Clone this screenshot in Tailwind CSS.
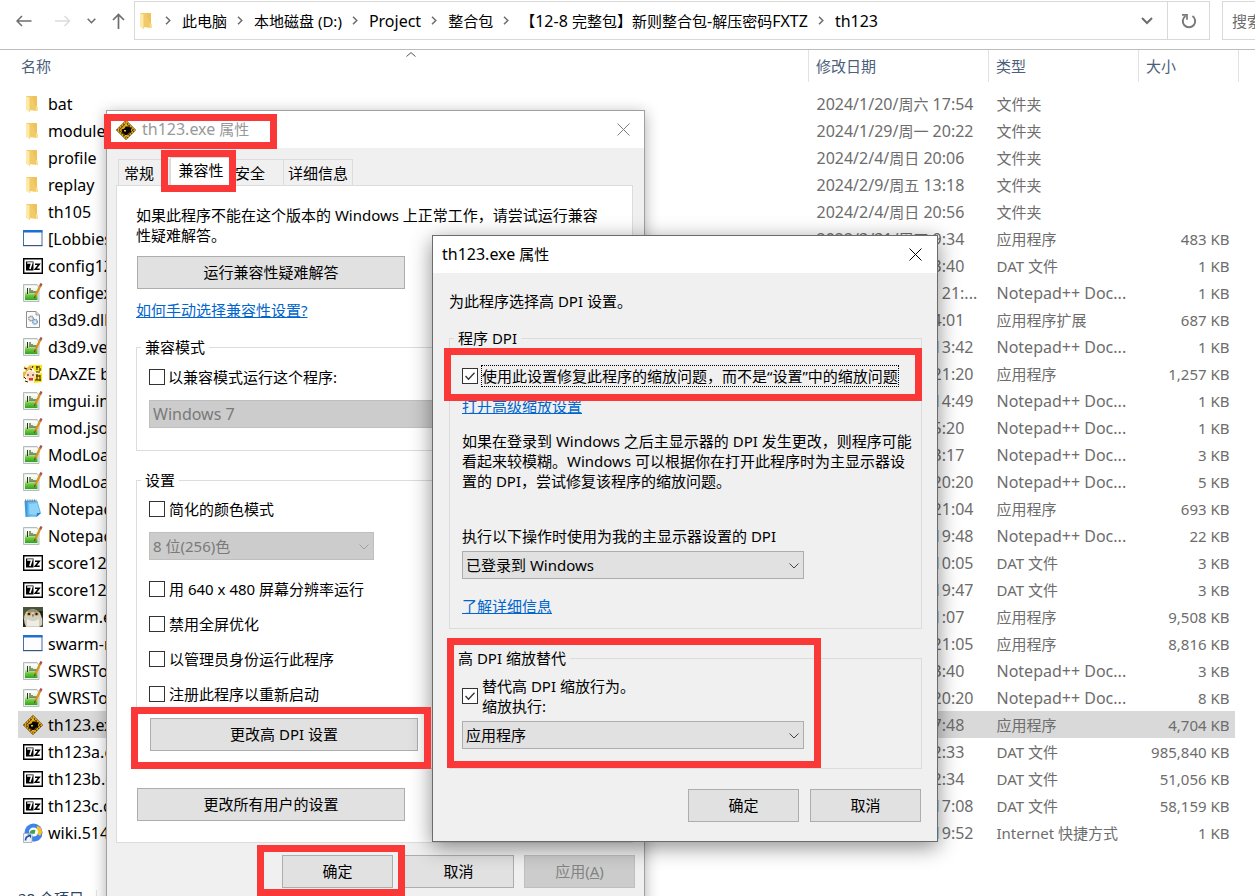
<!DOCTYPE html>
<html lang="zh-CN">
<head>
<meta charset="utf-8">
<title>th123</title>
<script src="https://cdn.jsdelivr.net/npm/@tailwindcss/browser@4"></script>
</head>
<body class="bg-white">
<svg class="absolute h-0 w-0" aria-hidden="true">
  <defs><linearGradient id="gn" x1="0" y1="0" x2="0" y2="1"><stop offset="0" stop-color="#fff"/><stop offset=".4" stop-color="#e2f3d0"/><stop offset=".65" stop-color="#74c840"/><stop offset="1" stop-color="#2da421"/></linearGradient></defs>
  <symbol id="i-folder" viewBox="0 0 20 20"><path d="M3 2h11v15l-8-1z" fill="#f0cb68"/><path d="M9 2h5v11h-1z" fill="#eec25c"/><path d="M3 2l4 2v14l-4-2z" fill="#fde9a9"/><path d="M6 3.500h1V18H6z" fill="#f7d987"/><path d="M13 12l2 1v4h-2z" fill="#fbe08f"/></symbol>
  <symbol id="i-app" viewBox="0 0 20 20"><path d="M.5 1.500h18.500v15H.5z" fill="#fdfdff" stroke="#4a6da8"/><path d="M0 1h19.500v2.500H0z" fill="#1d6fd0"/><path d="M0 16h19.500v1.200H0z" fill="#3a5580"/></symbol>
  <symbol id="i-7z" viewBox="0 0 20 20"><path d="M.7 2.700h18.600v14.600H.7z" fill="#fff" stroke="#000" stroke-width="1.400"/><path d="M3 5.500h7.500v9H3z" fill="#000"/><path d="M4.200 7h4.600L6.900 13" fill="none" stroke="#fff" stroke-width="1.600"/><path d="M12 8.300h4.200l-3.900 5h4.400" fill="none" stroke="#000" stroke-width="1.600"/></symbol>
  <symbol id="i-npp" viewBox="0 0 20 20"><path d="M.5 1.500h13.500l2 2.500v14.500H.5z" fill="#e8ecec" stroke="#a5adad" stroke-width=".8"/><path d="M2 3h11.500l1 1.500v12.500H2z" fill="url(#gn)"/><path d="M4.500 5v6M7 5v5M9 7v3M11 8v2M13 8v2" stroke="#26331f" stroke-width="1"/><path d="M17.500 2.500L12 13.500" stroke="#d9921f" stroke-width="2.200"/><path d="M18.500.5l-1.300 2.600" stroke="#a4525b" stroke-width="2.400"/><path d="M12.300 12.500l-.9 2.600" stroke="#5a4022" stroke-width="1"/></symbol>
  <symbol id="i-dll" viewBox="0 0 20 20"><path d="M3.500 1.500h9.500l3.500 3.500v12.500h-13z" fill="#fafafa" stroke="#8e8e8e"/><path d="M13 1.500V5h3.500" fill="#ddd" stroke="#8e8e8e" stroke-width=".8"/><circle cx="8" cy="8.500" r="2.300" fill="#e8e8e8" stroke="#8b9299" stroke-width="1.400" stroke-dasharray="1.200 .5"/><circle cx="12" cy="11.800" r="2.300" fill="#d6e9f8" stroke="#6795bd" stroke-width="1.400" stroke-dasharray="1.200 .5"/></symbol>
  <symbol id="i-face" viewBox="0 0 20 20"><path d="M0 0h20v19.500H0z" fill="#fffbe9"/><path d="M1 2l3 2 3-3 2 3-6 4zM0 8l4-1-2 5-2 3zM8 1h4v3H8z" fill="#e7b93f"/><path d="M8 1h11v6l-7 1-1-3-3-1zM12 10l7-1v9l-8 1v-4z" fill="#f7e51c"/><path d="M3 9l4-2 5 1 1 5-4 4-5-1z" fill="#ffd8bd"/><path d="M6 14h4v2.500H6z" fill="#d8362b"/><path d="M4 11h2M9 11h2M13 3h4M14 2v4M17 4v3M13 8h4M13 12h4M14 10v6M17 11v6M12 16h6M1 4l3 1M2 17l3 1M7 5l2 1M1 13l2 2M10 2l-1 2" stroke="#2a1608" stroke-width="1"/></symbol>
  <symbol id="i-notepad" viewBox="0 0 20 20"><path d="M1.500 2l11.500-.5 1.500 15.500-12 1z" fill="#3b9be0"/><path d="M4.500 3l10-1 3.500 12-4.500 4-9-1.500z" fill="#67bdf0"/><path d="M6 5l8-1 2.500 9-3 3-7-1z" fill="#8fd4f8"/><path d="M13.500 18l.4-4 4.100 0z" fill="#2c79c4"/><path d="M2 1.500h11.500" stroke="#777f88" stroke-width="1.800" stroke-dasharray="1 .8"/></symbol>
  <symbol id="i-owl" viewBox="0 0 20 20"><path d="M0 0h20v20H0z" fill="#4a5537"/><path d="M0 12h4v8H0zM15 4h5v7h-5z" fill="#1e2618"/><path d="M3 5q7-6 14 1 3 6 2 12l-3 2H3q-4-8 0-15z" fill="#d2cec0"/><path d="M4 4q6-4 12 1l-3 1-3-1-4 1z" fill="#968f7c"/><ellipse cx="6" cy="7" rx="2.300" ry="1.800" fill="#c08a25"/><ellipse cx="13.500" cy="7" rx="2.300" ry="1.800" fill="#c08a25"/><circle cx="6" cy="7" r="1.100" fill="#111"/><circle cx="13.500" cy="7" r="1.100" fill="#111"/><path d="M9 7.500h1.800l-.8 3z" fill="#5b5040"/><path d="M4 12q6 4 12 0v7H4z" fill="#eeece4"/></symbol>
  <symbol id="i-th" viewBox="0 0 20 20"><path d="M10 0l10 10-10 10L0 10z" fill="#2a1a04"/><path d="M10 1.500l8.500 8.500-8.500 8.500L1.500 10z" fill="none" stroke="#e0a414" stroke-width="1.800" stroke-dasharray="2.200 .6"/><path d="M10 3.500l6.500 6.500-6.500 6.500L3.500 10z" fill="#e3ab18"/><path d="M5.500 9.500l3-1 1-2 3 0 2.500 1.500v4l-2 1-2 2H9l-3-2.500z" fill="#080502"/><path d="M8 10h2v1.500H8z" fill="#f0c52a"/><path d="M9 3.500h2v1H9zM9 15.500h3v1H9z" fill="#ffe04b"/></symbol>
  <symbol id="i-web" viewBox="0 0 20 20"><circle cx="10.500" cy="9.500" r="9" fill="#3f82ee"/><path d="M14 3q5 1 5 6.500L17 13l-4-3z" fill="#fdbf1c"/><path d="M12 13h7q-2 5-8 5.500z" fill="#3f82ee"/><circle cx="10.500" cy="9" r="4.500" fill="#fff"/><path d="M6.500 10q1-4 6-3l-1 4q-3-1-4.500 1z" fill="#35a853"/><path d="M.5 10.500h8.500v9H.5z" fill="#eef3f9" stroke="#9ba7b5" stroke-width=".8"/><path d="M2.500 17.500q0-4 3.500-4.500" fill="none" stroke="#1f4fa0" stroke-width="1.600"/><path d="M4.500 11.500h3.500v3.700z" fill="#1f4fa0"/></symbol>
  <symbol id="i-chev" viewBox="0 0 10 6"><path d="M.5.5L5 5 9.500.5" fill="none" stroke="currentColor"/></symbol>
  <symbol id="i-sep" viewBox="0 0 6 9"><path d="M1 .8l3.800 3.700L1 8.200" fill="none" stroke="currentColor" stroke-width="1.500"/></symbol>
  <symbol id="i-tick" viewBox="0 0 16 16"><path d="M3.500 8l3 3.200 6-6.400" fill="none" stroke="#333" stroke-width="1.300"/></symbol>
  <symbol id="i-x" viewBox="0 0 13 13"><path d="M.5.5l12 12M12.500.5l-12 12" fill="none" stroke="currentColor"/></symbol>
</svg>

<div class="relative h-screen overflow-hidden bg-white font-['Noto_Sans','Noto_Sans_CJK_SC',sans-serif] text-[15px] leading-5 text-black">

  <!-- Explorer window -->
  <header class="flex h-[50px] items-start border-b border-[#bcbcbc] pt-px">
    <nav class="flex h-10 w-[134px] shrink-0 items-center pl-4 text-[#6d6d6d]" aria-label="导航">
      <button aria-label="后退" class="mr-[23px]"><svg class="h-4 w-4" viewBox="0 0 16 16"><path d="M15.500 8H1M6 3L1 8l5 5" fill="none" stroke="currentColor" stroke-width="1.500"/></svg></button>
      <button aria-label="前进" disabled class="mr-4 text-[#dcdcdc]"><svg class="h-4 w-4" viewBox="0 0 16 16"><path d="M0 8h14.500M9.500 3l5 5-5 5" fill="none" stroke="currentColor" stroke-width="1.500"/></svg></button>
      <button aria-label="最近浏览的位置" class="mr-4"><svg class="h-[6px] w-[9px]" viewBox="0 0 9 6"><path d="M.7.7l3.800 4 3.800-4" fill="none" stroke="currentColor" stroke-width="1.600"/></svg></button>
      <button aria-label="上移"><svg class="h-4 w-[13px]" viewBox="0 0 13 16"><path d="M6.500 16V1.500M1 7l5.500-5.500L12 7" fill="none" stroke="currentColor" stroke-width="1.700"/></svg></button>
    </nav>
    <div class="flex h-[39px] min-w-0 flex-1 items-center border border-[#d9d9d9] pl-[2px]">
      <svg class="mr-2 h-5 w-5 shrink-0"><use href="#i-folder"/></svg>
      <ol class="flex flex-1 items-center gap-[10px] whitespace-nowrap text-[#6d6d6d] *:flex *:items-center *:gap-[11px]">
        <li><svg class="h-[9px] w-[6px]"><use href="#i-sep"/></svg><a href="#" class="text-black">此电脑</a></li>
        <li><svg class="h-[9px] w-[6px]"><use href="#i-sep"/></svg><a href="#" class="text-black">本地磁盘 (D:)</a></li>
        <li><svg class="h-[9px] w-[6px]"><use href="#i-sep"/></svg><a href="#" class="text-base text-black">Project</a></li>
        <li><svg class="h-[9px] w-[6px]"><use href="#i-sep"/></svg><a href="#" class="text-black">整合包</a></li>
        <li><svg class="h-[9px] w-[6px]"><use href="#i-sep"/></svg><a href="#" class="text-black">【<span class="text-base">12-8 </span>完整包】新则整合包<span class="text-base">-</span>解压密码<span class="text-base">FXTZ</span></a></li>
        <li><svg class="h-[9px] w-[6px]"><use href="#i-sep"/></svg><a href="#" class="text-base text-black">th123</a></li>
      </ol>
      <button aria-label="以前的位置" class="mr-[14px] text-[#6d6d6d]"><svg class="h-[8px] w-[12px]" viewBox="0 0 12 8"><path d="M1 1l5 5 5-5" fill="none" stroke="currentColor" stroke-width="2"/></svg></button>
      <button aria-label="刷新" class="flex h-full w-[42px] items-center justify-center border-l border-[#d9d9d9] text-[#7a7a7a]"><svg class="h-4 w-4" viewBox="0 0 16 16"><path d="M11.500 3A6.200 6.200 0 1 1 4.500 3" fill="none" stroke="currentColor" stroke-width="2"/><path d="M1 1.800h5v5" fill="none" stroke="currentColor" stroke-width="1.700"/></svg></button>
    </div>
    <input aria-label="搜索" placeholder="搜索" class="ml-3 h-[39px] w-[33px] border border-r-0 border-[#d9d9d9] pl-[9px] placeholder:text-[#6d6d6d] placeholder:opacity-100">
  </header>

  <div class="ml-[18px] mr-4">
    <table class="w-full table-fixed border-collapse whitespace-nowrap text-[#6d6d6d]">
      <colgroup><col><col class="w-[180px]"><col class="w-[150px]"><col class="w-[96px]"><col class="w-[4px]"></colgroup>
      <thead class="text-[#4c607a]">
        <tr class="h-8 text-left">
          <th class="relative border-r border-[#e2e2e2] pl-[3px] font-normal">名称<svg class="absolute left-[388px] top-[2px] h-[5px] w-[10px] text-[#555]" viewBox="0 0 10 5"><path d="M.5 4.500L5 .6l4.500 3.900" fill="none" stroke="currentColor"/></svg></th>
          <th class="border-r border-[#e2e2e2] pl-[7px] font-normal">修改日期</th>
          <th class="border-r border-[#e2e2e2] pl-[7px] font-normal">类型</th>
          <th class="pl-[7px] font-normal">大小</th>
          <th class="border-r border-[#e2e2e2]"></th>
        </tr>
        <tr class="h-2"><td colspan="5"></td></tr>
      </thead>
      <tbody id="files"></tbody>
    </table>
  </div>
  <footer class="flex items-center gap-3 pl-[18px] pt-[42px] text-[#2b4463]"><span>28 个项目</span><span class="h-4 w-px bg-[#e6e6e6]"></span></footer>

  <!-- Properties window -->
  <section aria-label="th123.exe 属性" class="absolute left-[106px] top-[110px] h-[820px] w-[539px] border border-[#a0a0a0] bg-[#f0f0f0] shadow-[0_3px_14px_rgba(0,0,0,0.32)]">
    <div class="flex h-[37px] items-center bg-white pl-[9px] pr-[14px] text-[#999]">
      <svg class="mr-[6px] h-5 w-5"><use href="#i-th"/></svg>
      <h2 class="flex-1 pb-[2px]"><span class="text-base leading-5">th123.exe</span> 属性</h2>
      <button aria-label="关闭" class="text-[#7f7f7f]"><svg class="h-[13px] w-[13px]"><use href="#i-x"/></svg></button>
    </div>
    <div class="px-[9px] pt-[9px]">
      <div role="tablist" class="flex h-7 items-end pl-[2px] pr-px">
        <button role="tab" class="h-[26px] w-[52px] border border-b-0 border-[#dcdcdc] pl-[5px] text-left">常规</button>
        <button role="tab" aria-selected="true" class="-mb-px h-[29px] w-[62px] border border-b-0 border-[#dcdcdc] bg-white pb-1">兼容性</button>
        <button role="tab" class="h-[26px] w-[51px] border border-x-0 border-b-0 border-[#dcdcdc] pl-[3px] text-left">安全</button>
        <button role="tab" class="h-[26px] w-[70px] border border-b-0 border-[#dcdcdc]">详细信息</button>
      </div>
      <div role="tabpanel" class="mr-[2px] flex flex-col items-start border border-[#dcdcdc] bg-white px-[19px] pb-[21px] pt-[19px]">
        <p class="whitespace-nowrap">如果此程序不能在这个版本的 Windows 上正常工作，请尝试运行兼容<br>性疑难解答。</p>
        <button class="ml-px mt-[11px] h-[33px] w-[268px] border border-[#adadad] bg-[#e1e1e1] pb-[2px]">运行兼容性疑难解答</button>
        <a href="#" class="mt-[11px] text-[#0066cc] underline">如何手动选择兼容性设置?</a>
        <fieldset class="mt-[17px] w-full min-w-0 border border-[#dcdcdc] px-3 pb-[22px]">
          <legend class="-ml-2 px-1">兼容模式</legend>
          <label class="mt-[10px] flex items-center gap-[3px]"><input type="checkbox" class="h-4 w-4 appearance-none border border-[#333] bg-white">以兼容模式运行这个程序:</label>
          <select disabled aria-label="兼容模式" class="mt-[13px] block h-7 w-[360px] appearance-none border border-[#bfbfbf] bg-[#cccccc] pl-[3px] text-base text-[#7a7a7a] opacity-100"><option>Windows 7</option></select>
        </fieldset>
        <fieldset class="mt-[19px] w-full min-w-0 border border-[#dcdcdc] px-3 pb-[17px]">
          <legend class="-ml-2 px-1">设置</legend>
          <label class="mt-[9px] flex items-center gap-1"><input type="checkbox" class="h-4 w-4 appearance-none border border-[#333] bg-white">简化的颜色模式</label>
          <div class="relative mt-[13px] w-[225px] text-[#7a7a7a]">
            <select disabled aria-label="颜色" class="block h-7 w-full appearance-none border border-[#bfbfbf] bg-[#cccccc] pl-[3px] opacity-100"><option>8 位(256)色</option></select>
            <svg class="pointer-events-none absolute right-[5px] top-[12px] h-[6px] w-[10px] text-[#a0a0a0]"><use href="#i-chev"/></svg>
          </div>
          <div class="mt-[19px] flex flex-col gap-[15px]">
            <label class="flex items-center gap-1"><input type="checkbox" class="h-4 w-4 appearance-none border border-[#333] bg-white">用 640 x 480 屏幕分辨率运行</label>
            <label class="flex items-center gap-1"><input type="checkbox" class="h-4 w-4 appearance-none border border-[#333] bg-white">禁用全屏优化</label>
            <label class="flex items-center gap-1"><input type="checkbox" class="h-4 w-4 appearance-none border border-[#333] bg-white">以管理员身份运行此程序</label>
            <label class="flex items-center gap-1"><input type="checkbox" class="h-4 w-4 appearance-none border border-[#333] bg-white">注册此程序以重新启动</label>
          </div>
          <button class="ml-px mt-[14px] block h-[33px] w-[268px] border border-[#adadad] bg-[#e1e1e1] pb-[2px]">更改高 DPI 设置</button>
        </fieldset>
        <button class="ml-px mt-[19px] h-[33px] w-[268px] border border-[#adadad] bg-[#e1e1e1] pb-[2px]">更改所有用户的设置</button>
      </div>
      <div class="mt-3 flex justify-end gap-[10px]">
        <button class="h-[33px] w-[111px] border border-[#adadad] bg-[#e1e1e1] pb-[2px]">确定</button>
        <button class="h-[33px] w-[111px] border border-[#adadad] bg-[#e1e1e1] pb-[2px]">取消</button>
        <button disabled class="h-[33px] w-[111px] border border-[#bfbfbf] bg-[#cccccc] pb-[2px] text-[#838383]">应用(<u>A</u>)</button>
      </div>
    </div>
  </section>

  <!-- DPI settings window -->
  <section aria-label="高 DPI 设置" class="absolute left-[432px] top-[235px] w-[506px] border border-[#6b6b6b] bg-[#f0f0f0] shadow-[0_5px_20px_rgba(0,0,0,0.45)]">
    <div class="flex h-[37px] items-center bg-white pl-[9px] pr-[15px]">
      <h2 class="flex-1 pb-[2px]"><span class="text-base leading-5">th123.exe</span> 属性</h2>
      <button aria-label="关闭"><svg class="h-[13px] w-[13px]"><use href="#i-x"/></svg></button>
    </div>
    <div class="px-[15px] pb-[19px] pt-[18px]">
      <p class="pl-px">为此程序选择高 DPI 设置。</p>
      <fieldset class="ml-px mt-[17px] min-w-0 border border-[#dcdcdc] px-3 pb-3">
        <legend class="-ml-2 px-1">程序 DPI</legend>
        <label class="mt-[17px] flex items-center gap-[3px]">
          <span class="grid"><input type="checkbox" checked class="col-start-1 row-start-1 h-4 w-4 appearance-none border border-[#333] bg-white"><svg class="pointer-events-none col-start-1 row-start-1 h-4 w-4"><use href="#i-tick"/></svg></span>
          <span class="whitespace-nowrap border border-dotted border-black">使用此设置修复此程序的缩放问题，而不是“设置”中的缩放问题</span>
        </label>
        <a href="#" class="mt-[9px] inline-block text-[#0066cc] underline">打开高级缩放设置</a>
        <p class="mt-[15px] whitespace-nowrap">如果在登录到 Windows 之后主显示器的 DPI 发生更改，则程序可能<br>看起来较模糊。Windows 可以根据你在打开此程序时为主显示器设<br>置的 DPI，尝试修复该程序的缩放问题。</p>
        <label for="dpi-from" class="mt-[35px] block">执行以下操作时使用为我的主显示器设置的 DPI</label>
        <div class="relative mt-[5px] w-[342px]">
          <select id="dpi-from" class="block h-7 w-full appearance-none border border-[#adadad] bg-[#e1e1e1] pl-[3px]"><option>已登录到 Windows</option></select>
          <svg class="pointer-events-none absolute right-[5px] top-[12px] h-[6px] w-[10px] text-[#444]"><use href="#i-chev"/></svg>
        </div>
        <a href="#" class="mt-[17px] block text-[#0066cc] underline">了解详细信息</a>
      </fieldset>
      <fieldset class="ml-px mt-[19px] min-w-0 border border-[#dcdcdc] px-3 pb-[19px]">
        <legend class="-ml-2 px-1">高 DPI 缩放替代</legend>
        <label class="mt-[8px] flex items-center gap-1">
          <span class="grid"><input type="checkbox" checked class="col-start-1 row-start-1 h-4 w-4 appearance-none border border-[#333] bg-white"><svg class="pointer-events-none col-start-1 row-start-1 h-4 w-4"><use href="#i-tick"/></svg></span>
          <span>替代高 DPI 缩放行为。<br>缩放执行:</span>
        </label>
        <div class="relative mt-[5px] w-[342px]">
          <select aria-label="缩放执行" class="block h-7 w-full appearance-none border border-[#adadad] bg-[#e1e1e1] pl-[3px]"><option>应用程序</option></select>
          <svg class="pointer-events-none absolute right-[5px] top-[12px] h-[6px] w-[10px] text-[#444]"><use href="#i-chev"/></svg>
        </div>
      </fieldset>
      <div class="mt-5 flex justify-end gap-[11px] pr-px">
        <button class="h-[33px] w-[111px] border border-[#adadad] bg-[#e1e1e1] pb-[2px]">确定</button>
        <button class="h-[33px] w-[111px] border border-[#adadad] bg-[#e1e1e1] pb-[2px]">取消</button>
      </div>
    </div>
  </section>

  <!-- Highlight frames -->
  <div class="pointer-events-none *:absolute *:border-[7px] *:border-[#fb3838]">
    <div class="left-[104px] top-[114px] h-[35px] w-[173px]"></div>
    <div class="left-[161px] top-[150px] h-[42px] w-[75px]"></div>
    <div class="left-[444px] top-[348px] h-[53px] w-[478px]"></div>
    <div class="left-[447px] top-[638px] h-[130px] w-[374px]"></div>
    <div class="left-[131px] top-[707px] h-[62px] w-[300px]"></div>
    <div class="left-[257px] top-[845px] h-[51px] w-[148px]"></div>
  </div>
</div>

<script>
const files = [
  ['folder', 'bat', '2024/1/20/周六 17:54', '文件夹', ''],
  ['folder', 'module', '2024/1/29/周一 20:22', '文件夹', ''],
  ['folder', 'profile', '2024/2/4/周日 20:06', '文件夹', ''],
  ['folder', 'replay', '2024/2/9/周五 13:18', '文件夹', ''],
  ['folder', 'th105', '2024/2/4/周日 20:56', '文件夹', ''],
  ['app', '[Lobbies]', '2022/3/31/周四 9:34', '应用程序', '483 KB'],
  ['7z', 'config123.dat', '2024/1/21/周日 3:40', 'DAT 文件', '1 KB'],
  ['npp', 'configex123.ini', '2023/12/10/周日 21:...', 'Notepad++ Doc...', '1 KB'],
  ['dll', 'd3d9.dll', '2022/2/11/周五 4:01', '应用程序扩展', '687 KB'],
  ['npp', 'd3d9.version', '2024/1/20/周六 13:42', 'Notepad++ Doc...', '1 KB'],
  ['face', 'DAxZE beta', '2024/1/20/周六 21:20', '应用程序', '1,257 KB'],
  ['npp', 'imgui.ini', '2024/1/20/周六 14:49', 'Notepad++ Doc...', '1 KB'],
  ['npp', 'mod.json', '2024/1/27/周六 5:20', 'Notepad++ Doc...', '1 KB'],
  ['npp', 'ModLoader', '2022/8/13/周六 3:17', 'Notepad++ Doc...', '3 KB'],
  ['npp', 'ModLoader', '2024/1/20/周六 20:20', 'Notepad++ Doc...', '5 KB'],
  ['notepad', 'Notepad', '2023/8/12/周六 21:04', '应用程序', '693 KB'],
  ['npp', 'Notepad', '2024/1/20/周六 19:48', 'Notepad++ Doc...', '22 KB'],
  ['7z', 'score123.dat', '2024/1/20/周六 10:05', 'DAT 文件', '3 KB'],
  ['7z', 'score123.dat', '2024/1/20/周六 19:47', 'DAT 文件', '3 KB'],
  ['owl', 'swarm.exe', '2024/1/13/周六 1:07', '应用程序', '9,508 KB'],
  ['app', 'swarm-r', '2023/8/12/周六 21:05', '应用程序', '8,816 KB'],
  ['npp', 'SWRSToys', '2024/1/13/周六 3:40', 'Notepad++ Doc...', '3 KB'],
  ['npp', 'SWRSToys', '2024/1/20/周六 20:20', 'Notepad++ Doc...', '8 KB'],
  ['th', 'th123.exe', '2012/6/16/周六 7:48', '应用程序', '4,704 KB'],
  ['7z', 'th123a.dat', '2010/8/14/周六 2:33', 'DAT 文件', '985,840 KB'],
  ['7z', 'th123b.dat', '2010/8/14/周六 2:34', 'DAT 文件', '51,056 KB'],
  ['7z', 'th123c.dat', '2012/6/16/周六 17:08', 'DAT 文件', '58,159 KB'],
  ['web', 'wiki.514', '2023/8/12/周六 19:52', 'Internet 快捷方式', '1 KB'],
];
const body = document.getElementById('files');
for (const [icon, name, date, type, size] of files) {
  const on = icon === 'th' ? 'bg-[#d9d9d9]' : '';
  const day = date.replace(/周./, m => `<span class="text-[15px]">${m}</span>`);
  const kind = /^Notepad/.test(type) ? 'text-base' : '';
  body.insertAdjacentHTML('beforeend', `<tr class="h-[27px]">
    <td class="${on} p-0"><span class="flex items-center overflow-hidden pl-[5px] text-base leading-5 text-black"><svg class="mr-[5px] h-5 w-5 shrink-0"><use href="#i-${icon}"/></svg>${name}</span></td>
    <td class="${on} py-0 pl-2 pr-0 text-base leading-5">${day}</td>
    <td class="${on} py-0 pl-2 pr-0 leading-5 ${kind}">${type}</td>
    <td class="${on} py-0 pl-0 pr-[5px] text-right leading-5">${size}</td><td></td></tr>`);
}
</script>
</body>
</html>
